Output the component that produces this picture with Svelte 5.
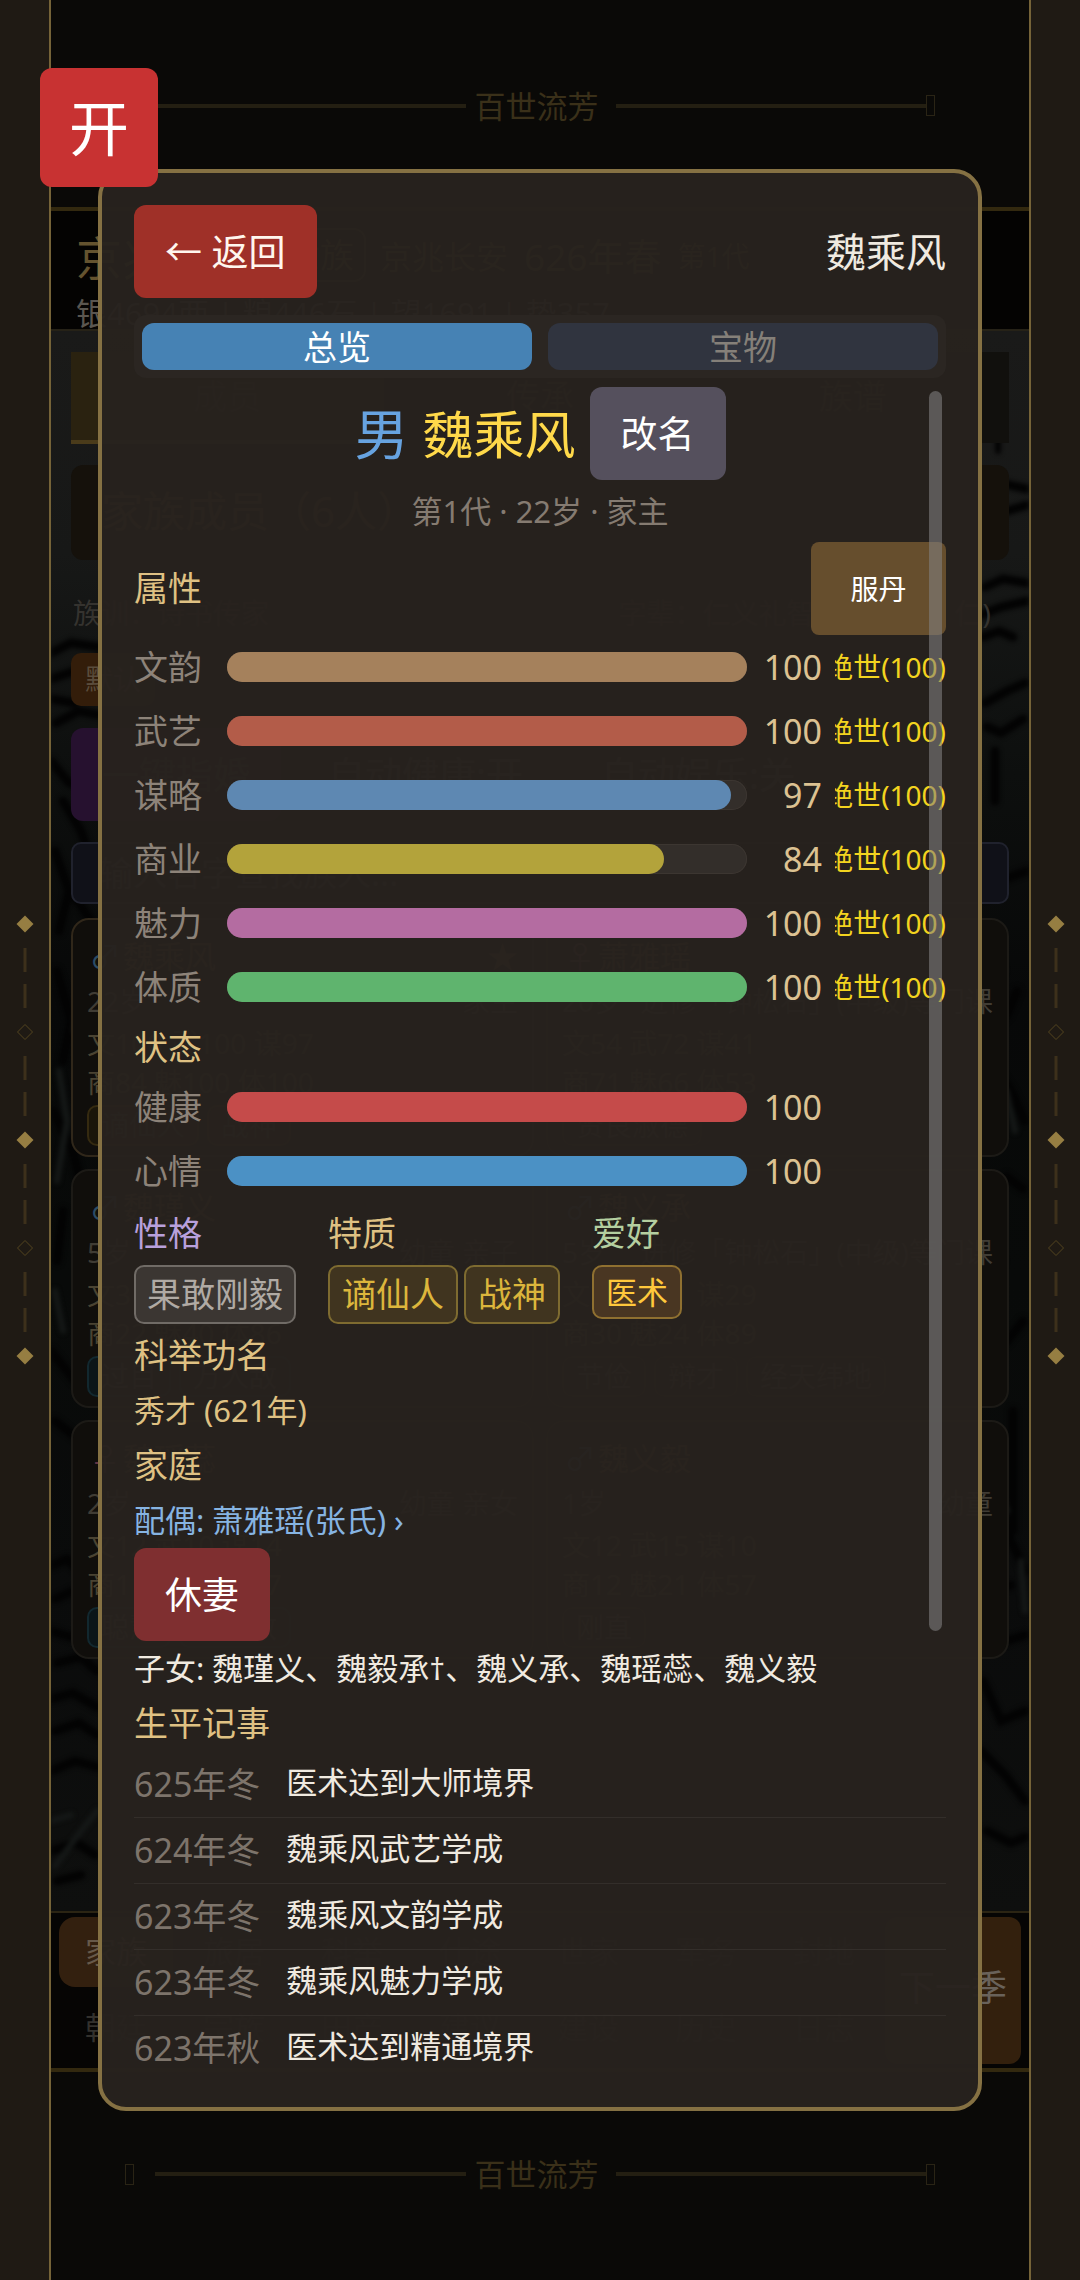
<script>
  const attributes = [
    { label: '文韵', value: 100, color: '#a5815c' },
    { label: '武艺', value: 100, color: '#b35c49' },
    { label: '谋略', value: 97, color: '#5e88b2' },
    { label: '商业', value: 84, color: '#b3a33b' },
    { label: '魅力', value: 100, color: '#b46ca1' },
    { label: '体质', value: 100, color: '#5fb46e' }
  ];
  const states = [
    { label: '健康', value: 100, color: '#c54b4a' },
    { label: '心情', value: 100, color: '#4b91c5' }
  ];
  const events = [
    ['625年冬', '医术达到大师境界'],
    ['624年冬', '魏乘风武艺学成'],
    ['623年冬', '魏乘风文韵学成'],
    ['623年冬', '魏乘风魅力学成'],
    ['623年秋', '医术达到精通境界']
  ];
  const members = [
    { sex: '♂', name: '魏乘风', star: '★', age: '22岁', role: '家主', a: '文100 武100 谋97', b: '商84 魅100 体100', tags: ['谪仙人', '战神'], tone: 'head' },
    { sex: '♀', name: '萧雅瑶', star: '', age: '20岁', role: '进修「钟松石」(中级)等门课', a: '文54 武72 谋41', b: '商71 魅66 体53', tags: ['贤良淑德'], tone: 'plain' },
    { sex: '♂', name: '魏瑾义', star: '', age: '5岁', role: '幼童 亲子', a: '文31 武28 谋35', b: '商22 魅40 体86', tags: ['过目', '万人敌'], tone: 'blue' },
    { sex: '♂', name: '魏义承', star: '', age: '5岁', role: '进修「钟松石」(中级)等门课', a: '文24 武31 谋29', b: '商30 魅24 体89', tags: ['节俭', '辩才', '经天纬地'], tone: 'plain' },
    { sex: '♀', name: '魏瑶蕊', star: '', age: '2岁', role: '幼童 亲女', a: '文12 武10 谋14', b: '商11 魅20 体57', tags: ['聪慧', '万人敌'], tone: 'blue' },
    { sex: '♂', name: '魏义毅', star: '', age: '1岁', role: '幼童', a: '文12 武15 谋10', b: '商12 魅21 体57', tags: ['刚直'], tone: 'plain' }
  ];
  const nav = ['家族', '旅居', '科举', '仕途', '世家', '军务', '封地', '朝廷', '宗族', '田产', '建议', '建设', '历史', '日志'];
  const rail = ['full', 'dash', 'dash', 'open', 'dash', 'dash', 'full', 'dash', 'dash', 'open', 'dash', 'dash', 'full'];
</script>

{#snippet side()}
  <div class="rail">
    {#each rail as kind}
      <svg viewBox="0 0 36 36">
        {#if kind === 'full'}
          <path d="M18 9.5 26.5 18 18 26.500 9.500 18Z" fill="#967e42" />
        {:else if kind === 'open'}
          <path d="M18 10.500 25.500 18 18 25.500 10.500 18Z" fill="none" stroke="#53441f" />
        {:else}
          <path d="M18 6V30" stroke="#3d301b" stroke-width="3" />
        {/if}
      </svg>
    {/each}
  </div>
{/snippet}

{#snippet banner(place)}
  <div class="banner {place}">
    <i class="box"></i><span class="line"></span>
    <span class="motto">百世流芳</span>
    <span class="line"></span><i class="box"></i>
  </div>
{/snippet}

{#snippet stat(item, limit)}
  <div class="stat">
    <span class="stat-label">{item.label}</span>
    <div class="track" role="meter" aria-label={item.label} aria-valuemin="0" aria-valuemax="100" aria-valuenow={item.value}>
      <div class="fill" style="width: {item.value}%; background: {item.color}"></div>
    </div>
    <span class="value">{item.value}</span>
    {#if limit}<span class="limit"><span>绝世(100)</span></span>{/if}
  </div>
{/snippet}

<div class="page">
  <div class="scene" inert>
    {@render side()}
    <div class="game">
      {@render banner('top')}
      <header class="status">
        <div class="status-row">
          <strong>京兆魏氏</strong><span class="rank">世族</span><span class="place">京兆长安</span><span class="season">626年春</span><small>第1代</small>
        </div>
        <div class="funds">银4694两 | 粮446石 | 望1691 | 势357</div>
      </header>
      <div class="world">
        <svg class="ink" viewBox="0 0 978 1580" preserveAspectRatio="none">
          <g fill="none" stroke="#030303" stroke-linecap="round">
            <path d="M0 322 20 312 47 316M0 348 30 338 50 326M0 368 22 372 48 352M5 392 28 380 47 384M0 430 18 452 47 462M12 470 30 500 44 540M4 520 18 560 8 600M20 560 40 590 46 640M6 640 20 690 12 730M30 700 44 760M2 780 22 820 34 870M12 880 6 930M36 900 42 960M0 1020 24 1050 44 1060M4 1090 30 1110 46 1100M0 1235 16 1228 30 1242 46 1236M4 1268 22 1260 44 1272M0 1300 20 1306 46 1296M6 1332 30 1326 46 1340M0 1368 22 1362 46 1376M4 1400 28 1392 46 1404M0 1440 24 1430 46 1436M0 1520 26 1512 44 1524M6 1550 30 1544" stroke-width="9" />
            <path d="M930 150 950 152 976 158M932 176 956 180 976 174M934 256 952 248 976 252M930 284 950 276 976 270M932 306 948 300 962 306M934 372 956 360 974 352M936 396 950 402 972 388M934 566 954 548 976 540M938 700 956 684 966 660M940 730 960 760 974 790M934 860 956 846 972 858M936 900 950 930 944 960M934 1000 956 1010 972 990M930 1110 946 1180 974 1240M936 1262 960 1254M934 1290 956 1310 974 1304M932 1350 950 1390 974 1380M930 1420 954 1444 974 1470M936 1500 960 1512 974 1506M962 1080V1200M944 420V470" stroke-width="9" />
            <path d="M947 75V120" stroke-width="6" />
          </g>
          <g fill="none" stroke="#151817" stroke-width="6" stroke-linecap="round">
            <path d="M8 740 16 790 6 850M30 640 24 700M4 960 12 1000M4 1535 30 1500 46 1480M0 1490 20 1484M942 600 952 640M955 760 964 800M940 1140 956 1180M970 1230 974 1280" />
          </g>
        </svg>
        <div class="scene-tabs"><span class="on">成员</span><span>传承</span><span>族谱</span></div>
        <div class="heading">家族成员（6人）</div>
        <div class="rules"><span>族训：诗书传家</span><span>字辈：仁义礼智信（当前：仁)</span></div>
        <span class="sort">默认</span>
        <div class="tools"><span class="wed">一键指婚</span><span>自动健康:开</span><span>自动娱乐:关</span></div>
        <input aria-label="查找族人" placeholder="输入名字查找族人..." />
        <div class="cards">
          {#each members as m}
            <article class="card {m.tone}">
              <div class="card-name"><i class:female={m.sex === '♀'}>{m.sex}</i><b>{m.name}</b><em>{m.star}</em></div>
              <div class="card-age"><span>{m.age}</span><span>{m.role}</span></div>
              <div class="card-stats">{m.a}<br />{m.b}</div>
              <div class="card-tags">{#each m.tags as t}<span>{t}</span>{/each}</div>
            </article>
          {/each}
        </div>
      </div>
      <nav class="nav">
        <div class="nav-items">
          {#each nav as item, i}<span class:on={i === 0}>{item}</span>{/each}
        </div>
        <span class="next">下一季</span>
      </nav>
      {@render banner('bottom')}
    </div>
    {@render side()}
  </div>

  <main class="modal">
    <div class="modal-head">
      <button class="btn back">← 返回</button>
      <span class="head-name">魏乘风</span>
    </div>
    <div class="tabs" role="tablist">
      <button role="tab" aria-selected="true" class="tab on">总览</button>
      <button role="tab" aria-selected="false" class="tab">宝物</button>
    </div>
    <div class="body">
      <div class="title">
        <span class="sex">男</span>
        <h1>魏乘风</h1>
        <button class="btn rename">改名</button>
      </div>
      <p class="summary">第1代 · 22岁 · 家主</p>
      <div class="attr-head">
        <h2>属性</h2>
        <button class="btn pill">服丹</button>
      </div>
      {#each attributes as item}{@render stat(item, true)}{/each}
      <h2 class="states">状态</h2>
      {#each states as item}{@render stat(item, false)}{/each}
      <div class="traits">
        <section>
          <h2 class="violet">性格</h2>
          <div class="tags"><span class="tag grey">果敢刚毅</span></div>
        </section>
        <section>
          <h2>特质</h2>
          <div class="tags"><span class="tag gold">谪仙人</span><span class="tag gold">战神</span></div>
        </section>
        <section>
          <h2 class="green">爱好</h2>
          <div class="tags"><span class="tag amber">医术</span></div>
        </section>
      </div>
      <h2>科举功名</h2>
      <p class="degree">秀才 (621年)</p>
      <h2>家庭</h2>
      <a class="spouse" href="#spouse">配偶: 萧雅瑶(张氏) ›</a>
      <button class="btn divorce">休妻</button>
      <p class="children">子女: 魏瑾义、魏毅承†、魏义承、魏瑶蕊、魏义毅</p>
      <h2>生平记事</h2>
      <ol class="events">
        {#each events as [date, text]}
          <li><time>{date}</time><span>{text}</span></li>
        {/each}
      </ol>
      <div class="thumb"></div>
    </div>
  </main>

  <button class="toggle">开</button>
</div>

<style>
  :global(body) {
    background: #0a0907;
  }
  * {
    box-sizing: border-box;
  }
  .page {
    position: relative;
    display: grid;
    min-height: 100vh;
    font-family: 'Noto Sans', 'Noto Sans CJK SC', sans-serif;
    font-weight: 400;
  }
  .page :is(h1, h2, p, ol) {
    margin: 0;
    padding: 0;
    font-weight: 400;
    list-style: none;
  }
  i,
  em {
    font-style: normal;
  }

  /* Scene behind the dialog */
  .scene {
    grid-area: 1 / 1;
    display: grid;
    grid-template-columns: 49px minmax(0, 1fr) 49px;
    background: #1f1a14;
  }
  .rail {
    display: flex;
    flex-direction: column;
    align-items: center;
    justify-content: center;
  }
  .rail svg {
    width: 36px;
    height: 36px;
  }
  .game {
    display: flex;
    flex-direction: column;
    border: 0 solid #756338;
    border-width: 0 2px;
    background: #0a0907;
    white-space: nowrap;
    overflow: hidden;
  }
  .banner {
    display: flex;
    align-items: center;
    height: 207px;
    padding: 4px 94px 0 74px;
    color: #3a3019;
  }
  .banner.bottom {
    height: 208px;
    padding-top: 0;
    padding-bottom: 4px;
    border-top: 0;
  }
  .box {
    width: 9px;
    height: 21px;
    border: 1px solid #2a2415;
  }
  .box:first-child {
    margin-right: 21px;
  }
  .line {
    flex: 1;
    height: 4px;
    background: #241f12;
  }
  .motto {
    margin: 0 17px 0 9px;
    font-size: 31px;
    line-height: 46px;
  }
  .status {
    height: 124px;
    padding: 14px 25px 0;
    border-top: 4px solid #33290f;
    border-bottom: 2px solid #262217;
    background: #040302;
  }
  .status-row {
    display: flex;
    align-items: center;
    height: 60px;
    color: #64532f;
    font-size: 37px;
  }
  strong {
    font-size: 46px;
    font-weight: 400;
  }
  .rank {
    margin: 0 14px;
    padding: 0 10px;
    border: 2px solid #4a3e24;
    border-radius: 12px;
    font-size: 34px;
    line-height: 50px;
  }
  .place {
    font-size: 32px;
  }
  .season {
    margin: 0 16px;
  }
  small {
    font-size: 28px;
  }
  .funds {
    color: #5a5650;
    font-size: 31px;
    line-height: 56px;
  }
  .world {
    position: relative;
    flex: 1;
    padding: 21px 20px;
    background: linear-gradient(#1a1a19, #171817 14%, #0d0f0e 28%, #070808 42%, #080a09 60%, #0a0b0b 80%, #0e0f0e);
  }
  .ink {
    position: absolute;
    inset: 0;
    width: 100%;
    height: 100%;
    filter: blur(2px);
  }
  .world > :not(.ink) {
    position: relative;
  }
  .scene-tabs {
    display: grid;
    grid-template-columns: repeat(3, 1fr);
    height: 91px;
    background: #11100d;
    color: #38342c;
    font-size: 34px;
    line-height: 88px;
    text-align: center;
  }
  .scene-tabs .on {
    border-bottom: 4px solid #4a3b1a;
    background: #2a2210;
  }
  .heading {
    height: 95px;
    margin-top: 22px;
    padding-left: 30px;
    border-radius: 12px;
    background: #15110b;
    color: #564724;
    font-size: 42px;
    line-height: 92px;
  }
  .rules {
    display: flex;
    justify-content: space-between;
    margin: 26px 18px 12px 2px;
    color: #35332f;
    font-size: 28px;
    line-height: 55px;
  }
  .sort {
    display: inline-block;
    height: 53px;
    padding: 0 14px;
    border-radius: 10px;
    background: #331d0a;
    color: #5a4c3c;
    font-size: 28px;
    line-height: 52px;
  }
  .tools {
    display: flex;
    gap: 16px;
    margin: 22px 0 21px;
    color: #4c4846;
    font-size: 37px;
    line-height: 93px;
  }
  .tools span {
    padding: 0 31px;
    border-radius: 12px;
    background: #111513;
  }
  .tools .wed {
    background: #26112f;
  }
  input {
    display: block;
    width: 100%;
    height: 62px;
    padding: 0 26px;
    border: 2px solid #20222d;
    border-radius: 10px;
    background: #101118;
    font: inherit;
    font-size: 34px;
  }
  input::placeholder {
    color: #3a3a3d;
  }
  .cards {
    display: grid;
    grid-template-columns: repeat(2, minmax(0, 1fr));
    gap: 12px;
    margin-top: 14px;
  }
  .card {
    height: 239px;
    padding: 14px 14px 0;
    border: 2px solid #1c1a16;
    border-radius: 18px;
    background: #100e0b;
    color: #403c34;
    font-size: 28px;
    line-height: 39px;
  }
  .card.head {
    border-color: #30271a;
  }
  .card-name,
  .card-age {
    display: flex;
    height: 45px;
    align-items: center;
  }
  .card-name {
    color: #56482c;
    font-size: 31px;
  }
  .card-name i {
    width: 36px;
    color: #2c4c66;
    text-align: center;
  }
  .card-name .female {
    color: #633444;
  }
  b {
    flex: 1;
    font-weight: 400;
  }
  .card-age {
    justify-content: space-between;
  }
  .card-stats {
    color: #4a4332;
  }
  .card-tags {
    display: flex;
    gap: 8px;
    margin-top: 3px;
  }
  .card-tags span {
    padding: 0 12px;
    border: 2px solid #1c1a16;
    border-radius: 10px;
    line-height: 37px;
  }
  .head .card-tags span {
    border-color: #352a10;
    background: #1a1509;
  }
  .blue .card-tags span {
    border-color: #12282f;
    background: #0b1518;
  }
  .nav {
    display: flex;
    gap: 4px;
    height: 161px;
    padding: 4px 8px;
    border-top: 2px solid #2b2413;
    border-bottom: 4px solid #33290f;
    background: #060504;
  }
  .nav-items {
    flex: 1;
    display: grid;
    grid-template-columns: repeat(7, 1fr);
    gap: 4px;
    color: #33312d;
    font-size: 31px;
    line-height: 69px;
    text-align: center;
  }
  .nav-items span {
    height: 70px;
    border-radius: 16px;
  }
  .nav-items .on {
    background: #33200f;
    color: #67594a;
  }
  .next {
    padding: 0 14px;
    border-radius: 12px;
    background: #33200d;
    color: #69625a;
    font-size: 36px;
    line-height: 142px;
  }

  /* Character dialog */
  .modal {
    grid-area: 1 / 1;
    position: relative;
    margin: 169px 98px;
    padding: 32px;
    border: 4px solid #857143;
    border-radius: 28px;
    background: rgba(39, 34, 30, 0.965);
    color: #f0eae0;
  }
  button {
    margin: 0;
    border: 0;
    color: #fff;
    font: inherit;
  }
  .btn {
    height: 93px;
    padding: 0 31px;
    border-radius: 12px;
    font-size: 37px;
    line-height: 50px;
  }
  .modal-head {
    display: flex;
    align-items: center;
    justify-content: space-between;
  }
  .back {
    background: #9f3028;
    color: #fff6ee;
  }
  .head-name {
    font-size: 40px;
    line-height: 60px;
  }
  .tabs {
    display: grid;
    grid-template-columns: 1fr 1fr;
    gap: 16px;
    margin: 17px 0 9px;
    padding: 8px;
    border-radius: 12px;
    background: #2b2622;
  }
  .tab {
    height: 47px;
    padding: 0;
    border-radius: 12px;
    background: #30343f;
    color: #858079;
    font-size: 34px;
    line-height: 46px;
  }
  .tab.on {
    background: #4682b4;
    color: #fff;
  }
  .body {
    position: relative;
  }
  .title {
    display: flex;
    align-items: center;
    justify-content: center;
    gap: 14px;
  }
  .sex {
    color: #67a3e0;
    font-size: 54px;
    line-height: 76px;
  }
  h1 {
    color: #ffd94a;
    font-size: 51px;
    line-height: 76px;
  }
  .rename {
    background: #55505d;
  }
  .summary {
    color: #857b71;
    font-size: 31px;
    line-height: 62px;
    text-align: center;
  }
  .attr-head {
    display: flex;
    align-items: center;
    justify-content: space-between;
  }
  h2 {
    color: #dfc183;
    font-size: 34px;
    line-height: 55px;
  }
  .states {
    line-height: 56px;
  }
  .pill {
    width: 135px;
    border-radius: 8px;
    background: #664e2d;
    font-size: 28px;
  }
  .stat {
    display: grid;
    grid-template-columns: 93px minmax(0, 1fr) 75px 13px 111px;
    align-items: center;
    height: 64px;
  }
  .stat-label {
    color: #8d8379;
    font-size: 34px;
    line-height: 50px;
  }
  .track {
    height: 30px;
    border-radius: 15px;
    background: #332e2a;
    box-shadow: inset 0 0 0 1px #3c3631;
  }
  .fill {
    height: 30px;
    border-radius: 15px;
  }
  .value {
    color: #dcc292;
    font-size: 34px;
    line-height: 50px;
    text-align: right;
  }
  .limit {
    grid-column: 5;
    display: flex;
    justify-content: flex-end;
    overflow: hidden;
    color: #f3d41f;
    font-size: 28px;
    line-height: 42px;
    white-space: nowrap;
  }
  .traits {
    display: flex;
    gap: 32px;
    padding: 3px 0 4px;
  }
  .tags {
    display: flex;
    align-items: flex-start;
    gap: 6px;
    margin-top: 4px;
  }
  .tag {
    padding: 0 11px;
    border: 2px solid;
    border-radius: 10px;
    font-size: 34px;
    line-height: 55px;
  }
  .grey {
    border-color: #706b66;
    background: #3b3632;
    color: #b0aaa4;
  }
  .gold {
    padding: 0 12px;
    border-color: #7e6b30;
    background: #40341f;
    color: #dcb63c;
  }
  .amber {
    padding: 0 12px;
    border-color: #8f7030;
    background: #493622;
    color: #ffc83c;
    font-size: 31px;
    line-height: 50px;
  }
  .violet {
    color: #b8a0dc;
  }
  .green {
    color: #b4cfa0;
  }
  .degree,
  .spouse,
  .children {
    display: block;
    font-size: 31px;
    line-height: 55px;
  }
  .degree {
    color: #dfc183;
  }
  .spouse {
    color: #86b4e2;
    text-decoration: none;
  }
  .divorce {
    display: block;
    background: #7f2f30;
  }
  .events {
    line-height: 0;
  }
  .events li {
    display: flex;
    align-items: flex-start;
    gap: 26px;
    padding: 7px 0;
    border-bottom: 1px solid #332e2a;
  }
  .events li:first-child {
    padding-top: 8px;
  }
  .events li:last-child {
    padding-bottom: 0;
    border-bottom: 0;
  }
  time {
    color: #7d746b;
    font-size: 34px;
    line-height: 51px;
  }
  .events span {
    font-size: 31px;
    line-height: 47px;
  }
  .thumb {
    position: absolute;
    top: 4px;
    right: 4px;
    width: 13px;
    height: 73.5%;
    border-radius: 7px;
    background: rgba(130, 130, 130, 0.58);
  }

  .toggle {
    position: absolute;
    top: 68px;
    left: 40px;
    width: 118px;
    height: 119px;
    padding: 0;
    border-radius: 12px;
    background: #c83232;
    font-size: 60px;
    line-height: 84px;
  }
</style>
